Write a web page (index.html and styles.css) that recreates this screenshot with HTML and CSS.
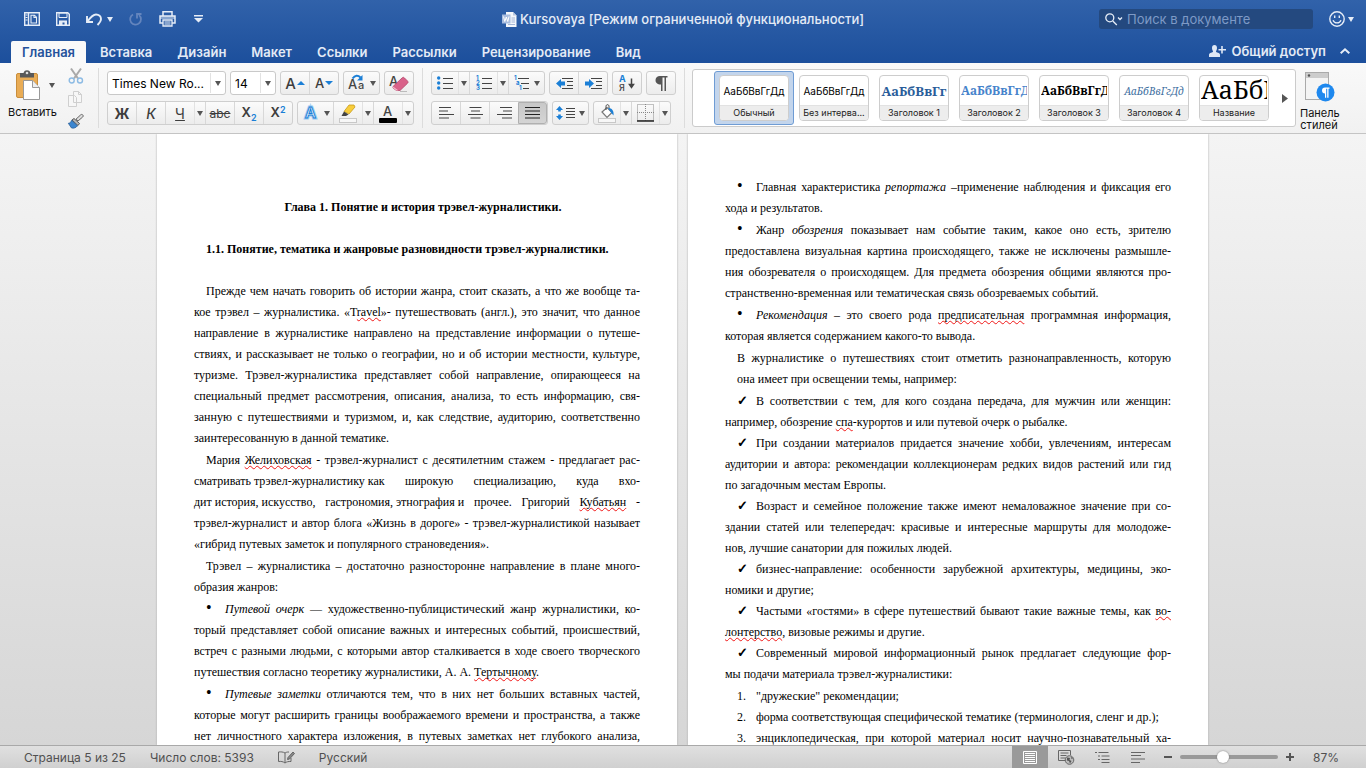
FILE: index.html
```html
<!DOCTYPE html>
<html lang="ru">
<head>
<meta charset="utf-8">
<title>Kursovaya</title>
<link rel="stylesheet" href="styles.css">
</head>
<body>
<header class="header">
  <div class="titlebar">
    <div class="quick">
      <button class="qbtn" aria-label="Боковая панель"><svg width="16" height="14" viewBox="0 0 16 14" fill="none" stroke="#e6edf7" stroke-width="1.4"><path d="M.7.7h14.600v12.600H.7zM4.500.7v12.600"/><path d="M1.500 3h2M1.500 5.500h2M1.500 8h2" stroke-width="1"/><path d="M7 3.200h3.500l2 2V11H7zM10 3v2.500h2.500" stroke-width="1.100"/></svg></button>
      <button class="qbtn" aria-label="Сохранить"><svg width="14" height="14" viewBox="0 0 14 14"><path d="M.7.7h11l1.600 1.600v11H.7z" fill="none" stroke="#e6edf7" stroke-width="1.400"/><path d="M3 1h8v4.500H3z" fill="none" stroke="#e6edf7"/><path d="M3 8.500h8V13H8.500v-2.500h-2V13H3z" fill="#e6edf7"/></svg></button>
      <button class="qbtn undo" aria-label="Отменить"><svg width="16" height="13" viewBox="0 0 16 13" fill="none" stroke="#e6edf7" stroke-width="1.900"><path d="M1 3v6h6M1.500 8.500C4 5 7 1.500 10 1.500c3 0 5 2 5 4.500 0 2.500-1.500 4-3.500 6"/></svg><i class="tri light"></i></button>
      <button class="qbtn redo" aria-label="Повторить"><svg width="14" height="14" viewBox="0 0 14 14" fill="none" stroke="#6485bd" stroke-width="1.800"><path d="M4 2.500a5.400 5.400 0 1 0 6 .6M12.500 2H8v4.500"/></svg></button>
      <button class="qbtn" aria-label="Печать"><svg width="17" height="16" viewBox="0 0 17 16"><path d="M4 5V.8h9V5M1 5h15v7H1z" fill="none" stroke="#e6edf7" stroke-width="1.500"/><path d="M1 5h15v3H1z" fill="#e6edf7" opacity=".5"/><path d="M4 9h9v6H4z" fill="#2b5ca5" stroke="#e6edf7" stroke-width="1.300"/><path d="M5.500 11h6M5.500 13h6" stroke="#e6edf7"/></svg></button>
      <button class="qbtn more" aria-label="Настроить"><svg width="9" height="8" viewBox="0 0 9 8"><path d="M0 0h9v1.500H0zM0 3h9L4.500 7.500z" fill="#e6edf7"/></svg></button>
    </div>
    <h1 class="doc-title"><svg width="15" height="15" viewBox="0 0 15 15"><path d="M4 0h7l3.500 3.500V15H4z" fill="#f4f7fb"/><path d="M11 0v3.500h3.500" fill="#b9c8e0"/><path d="M9.500 6H13M9.500 8H13M9.500 10H13M6 12.500h7" stroke="#a4b6d6"/><path d="M0 2.500h8.500v9H0z" fill="#a9bddf"/><path d="M1.500 4.500l1.300 5 1.500-4.500 1.500 4.500 1.200-5" fill="none" stroke="#fff"/></svg><span>Kursovaya [Режим ограниченной функциональности]</span></h1>
    <div class="title-right">
      <label class="search"><svg width="18" height="13" viewBox="0 0 18 13" fill="none" stroke="#e6edf7" stroke-width="1.300"><circle cx="4.800" cy="4.800" r="4"/><path d="M7.800 8l4 4M13 4.500l2 2 2-2"/></svg><input type="text" placeholder="Поиск в документе" aria-label="Поиск в документе"></label>
      <button class="qbtn smile" aria-label="Отзыв"><svg width="16" height="16" viewBox="0 0 16 16" fill="none" stroke="#e6edf7" stroke-width="1.400"><circle cx="8" cy="8" r="7.200"/><path d="M5.700 4.500v2.500M10.300 4.500v2.500M4 9.200c1.500 3.600 6.500 3.600 8 0"/></svg><i class="tri light"></i></button>
    </div>
  </div>
  <nav class="tabs">
    <button class="tab active">Главная</button>
    <button class="tab">Вставка</button>
    <button class="tab">Дизайн</button>
    <button class="tab">Макет</button>
    <button class="tab">Ссылки</button>
    <button class="tab">Рассылки</button>
    <button class="tab">Рецензирование</button>
    <button class="tab">Вид</button>
    <button class="share"><svg width="17" height="12" viewBox="0 0 17 12" fill="#dfe8f5"><path d="M5.500 0c1.700 0 2.500 1.200 2.500 3S7 6 7 6.800c0 .7 4 1 4 3V12H0V9.800c0-2 4-2.300 4-3C4 6 3 4.800 3 3s.8-3 2.500-3z"/><path d="M12.200 1h1.600v3h3.200v1.600h-3.200v3h-1.600v-3H9.500V4h2.700z"/></svg>Общий доступ</button>
    <button class="collapse" aria-label="Свернуть ленту"><svg width="10" height="6" viewBox="0 0 10 6" fill="none" stroke="#e6edf7" stroke-width="2"><path d="M.7 5.300L5 1.300l4.300 4"/></svg></button>
  </nav>
</header>

<section class="ribbon">
  <div class="clip">
    <button class="paste"><span class="paste-top"><svg width="25" height="31" viewBox="0 0 25 31"><rect x=".5" y="3.500" width="21" height="24" rx="1.500" fill="#e9ac55" stroke="#c98e3c"/><path d="M4 3h3.500C8 1 9.500.3 11 .3S14 1 14.500 3H18v4.500H4z" fill="#595959"/><circle cx="11" cy="3" r="1.300" fill="#ddd"/><path d="M7.500 10.500h9l7 7v12h-16z" fill="#fff" stroke="#999"/><path d="M16.500 10.500v7h7" fill="#eee" stroke="#999"/></svg><i class="tri"></i></span>Вставить</button>
    <div class="clip-tools">
      <button class="icon" aria-label="Вырезать"><svg width="16" height="16" viewBox="0 0 16 16" fill="none"><path d="M3 .5l7 10M13 .5l-7 10" stroke="#a9a9a9" stroke-width="2"/><circle cx="3.700" cy="12.500" r="2.500" stroke="#8dbbe4" stroke-width="1.400"/><circle cx="12" cy="12.500" r="2.500" stroke="#8dbbe4" stroke-width="1.400"/></svg></button>
      <button class="icon" aria-label="Копировать"><svg width="16" height="16" viewBox="0 0 16 16" fill="#f7f7f7" stroke="#cfcfcf"><path d="M.5 4.500h6l2 2v9h-8zM5.500.5h5l3 3v8h-8z"/><path d="M10.500.5v3h3" fill="none"/></svg></button>
      <button class="icon" aria-label="Формат по образцу"><svg width="16" height="15" viewBox="0 0 16 15"><path d="M14.500.7c1 .8.800 1.700.2 2.300L10 7 8 5.200 12.500 1c.6-.6 1.300-.8 2-.3z" fill="#ddd" stroke="#666"/><path d="M6 4.500l5.500 5-1.500 2-6-5.500z" fill="#bbb" stroke="#555"/><path d="M3.500 6.300l6 5.500c-1.500 2-3.500 2.700-6 2.200L.3 9.300c1.700 0 2.500-1 3.200-3z" fill="#3d86cf" stroke="#22568f" stroke-width=".7"/></svg></button>
    </div>
  </div>

  <div class="group">
    <div class="row">
      <span class="combo font-name"><select aria-label="Шрифт"><option>Times New Ro...</option></select><i class="tri"></i></span>
      <span class="combo font-size"><select aria-label="Размер"><option>14</option></select><i class="tri"></i></span>
      <div class="btns">
        <button class="b"  aria-label="Увеличить размер"><span class="ga big">A</span><i class="up"></i></button>
        <button class="b"  aria-label="Уменьшить размер"><span class="ga">A</span><i class="down"></i></button>
      </div>
      <div class="btns"><button class="b arrow" aria-label="Регистр"><svg width="18" height="18" viewBox="0 0 18 18"><text x="0" y="15" class="svg-t" font-size="13">A</text><text x="10" y="15" class="svg-t" font-size="11">a</text><path d="M4.500 4.500C7 1 10 1 12.500 3.500" fill="none" stroke="#1b7fd6" stroke-width="2"/><path d="M14.500 1v5.500H9z" fill="#1b7fd6"/></svg><i class="tri"></i></button></div>
      <div class="btns last"><button class="b" aria-label="Очистить формат"><svg width="22" height="20" viewBox="0 0 22 20"><text x="1" y="13" class="svg-t" font-size="13">A</text><path d="M5 13.500l9-8.500c1-.9 1.800-.9 2.500 0l3 3c.8.9.7 1.600 0 2.300L12 17.500H8.500L5 15z" fill="#d9628a" stroke="#b2456b" stroke-width=".8"/><path d="M5 13.500l5.500 4H8.500L5 15z" fill="#f4b7cb"/><path d="M12 18.500h7" stroke="#bbb"/></svg></button></div>
    </div>
    <div class="row">
      <div class="btns">
        <button class="b bold">Ж</button>
        <button class="b ital">К</button>
        <button class="b"><u>Ч</u></button>
        <button class="b drop" aria-label="Вид подчёркивания"><i class="tri"></i></button>
        <button class="b strike"><s>abc</s></button>
        <button class="b subsup">X<sub>2</sub></button>
        <button class="b subsup">X<sup>2</sup></button>
      </div>
      <div class="btns last">
        <button class="b arrow" aria-label="Эффекты текста"><svg width="18" height="18" viewBox="0 0 18 18"><text x="3" y="14" font-family="Inter, sans-serif" font-weight="600" font-size="15" fill="#fff" stroke="#9ccbf2" stroke-width="3">A</text><text x="3" y="14" font-family="Inter, sans-serif" font-weight="600" font-size="15" fill="#fff" stroke="#1b7fd6">A</text></svg><i class="tri"></i></button>
        <button class="b" aria-label="Выделение"><svg width="20" height="20" viewBox="0 0 20 20"><path d="M11 2h5l1 2-6 7-5-2.500z" fill="#f8cd3c" stroke="#c79a1a" stroke-width=".8"/><path d="M6 8.500l4.500 3L8 13H3.500z" fill="#444"/><rect x="1.500" y="15.500" width="17" height="4" fill="#f7f7f7" stroke="#c8c8c8"/></svg></button>
        <button class="b drop" aria-label="Цвет выделения"><i class="tri"></i></button>
        <button class="b" aria-label="Цвет текста"><svg width="20" height="20" viewBox="0 0 20 20"><text x="5" y="13" class="svg-t" font-size="13">A</text><rect x="1" y="15" width="18" height="5" rx="1" fill="#000"/></svg></button>
        <button class="b drop" aria-label="Другие цвета"><i class="tri"></i></button>
      </div>
    </div>
  </div>

  <div class="group">
    <div class="row">
      <div class="btns">
        <button class="b n26" aria-label="Маркеры"><svg width="16" height="14" viewBox="0 0 16 14"><g fill="#1b7fd6"><circle cx="1.700" cy="2" r="1.700"/><circle cx="1.700" cy="7" r="1.700"/><circle cx="1.700" cy="12" r="1.700"/></g><path d="M6 2.500h10M6 7.500h10M6 12.500h10" stroke="#444"/></svg></button>
        <button class="b drop" aria-label="Виды маркеров"><i class="tri"></i></button>
        <button class="b n28" aria-label="Нумерация"><svg width="16" height="16" viewBox="0 -1 16 16"><g fill="#1b7fd6" font-family="Inter, sans-serif" font-weight="700" font-size="6"><text y="4">1</text><text y="9">2</text><text y="14">3</text></g><path d="M6 2.500h10M6 7.500h10M6 12.500h10" stroke="#444"/></svg></button>
        <button class="b drop" aria-label="Виды нумерации"><i class="tri"></i></button>
        <button class="b arrow" aria-label="Многоуровневый список"><svg width="16" height="16" viewBox="0 -1 16 16"><g fill="#1b7fd6" font-family="Inter, sans-serif" font-weight="700" font-size="6"><text y="4">1</text><text x="2" y="9">a</text><text x="5" y="14">1</text></g><path d="M4 2.500h11M7 7.500h8M9 12.500h6" stroke="#444"/></svg><i class="tri"></i></button>
      </div>
      <div class="btns">
        <button class="b" aria-label="Уменьшить отступ"><svg width="17" height="13" viewBox="0 0 17 13"><path d="M0 6.500L5 2v2.500h4v4H5V11z" fill="#1b7fd6"/><path d="M6 1.500h11M11 4.500h6M11 8.500h6M6 11.500h11" stroke="#444"/></svg></button>
        <button class="b" aria-label="Увеличить отступ"><svg width="17" height="13" viewBox="0 0 17 13"><path d="M9 6.500L4 2v2.500H0v4h4V11z" fill="#1b7fd6"/><path d="M6 1.500h11M11 4.500h6M11 8.500h6M6 11.500h11" stroke="#444"/></svg></button>
      </div>
      <div class="btns"><button class="b" aria-label="Сортировка"><svg width="18" height="20" viewBox="0 -1 18 20"><text x="1" y="8" font-family="Inter, sans-serif" font-weight="700" font-size="9" fill="#1b7fd6">A</text><text x="1" y="17" class="svg-t" font-size="9">Я</text><path d="M13.500 4.500v9M11.500 10.500l2 3 2-3z" stroke="#444" stroke-width="1.500" fill="#444"/></svg></button></div>
      <div class="btns last"><button class="b" aria-label="Непечатаемые знаки"><svg width="14" height="15" viewBox="0 0 14 15"><path d="M6 0h7.500v1.500H12V15h-1.500V1.500H8.500V15H7V8.500H5.500A4.200 4.200 0 0 1 6 0z" fill="#555"/></svg></button></div>
    </div>
    <div class="row">
      <div class="btns">
        <button class="b" aria-label="По левому краю"><svg width="15" height="12" viewBox="0 0 15 12"><path d="M0 .5h12M0 4h9M0 7.500h15M0 11h10" stroke="#444"/></svg></button>
        <button class="b" aria-label="По центру"><svg width="15" height="12" viewBox="0 0 15 12"><path d="M1.500.5h12M3 4h9M0 7.500h15M2.500 11h10" stroke="#444"/></svg></button>
        <button class="b" aria-label="По правому краю"><svg width="15" height="12" viewBox="0 0 15 12"><path d="M3 .5h12M6 4h9M0 7.500h15M5 11h10" stroke="#444"/></svg></button>
        <button class="b pressed" aria-label="По ширине"><svg width="15" height="12" viewBox="0 0 15 12"><path d="M0 .5h15M0 4h15M0 7.500h15M0 11h15" stroke="#222"/></svg></button>
      </div>
      <div class="btns"><button class="b arrow" aria-label="Интервал"><svg width="19" height="14" viewBox="0 0 19 14"><path d="M3.500 0L7 4H4.800v1.500H2.200V4H0zM3.500 14L7 10H4.800V8.500H2.200V10H0z" fill="#1b7fd6"/><path d="M10 2.500h9M10 5.500h9M10 8.500h9M10 11.500h9" stroke="#444"/></svg><i class="tri"></i></button></div>
      <div class="btns">
        <button class="b n26" aria-label="Заливка"><svg width="18" height="19" viewBox="0 0 18 19"><path d="M4 8l5-4.500 5 5-5 5z" fill="#fff" stroke="#777" stroke-width="1.200"/><path d="M8 6V2.500c0-2.500 3-2.500 3 0V4" fill="none" stroke="#444"/><path d="M10 4c4 0 6 2.500 5.500 7.500l-2.500-3z" fill="#1b7fd6"/><rect x=".5" y="14.500" width="17" height="4" fill="#f7f7f7" stroke="#c8c8c8"/></svg></button>
        <button class="b drop" aria-label="Цвет заливки"><i class="tri"></i></button>
        <button class="b n28" aria-label="Границы"><svg width="17" height="18" viewBox="0 0 17 18"><path d="M.5.5h16v16H.5zM8.500 0v17M0 8.500h17" fill="none" stroke="#888" stroke-dasharray="1 1"/><path d="M0 17h17" stroke="#222" stroke-width="1.500"/></svg></button>
        <button class="b drop" aria-label="Виды границ"><i class="tri"></i></button>
      </div>
    </div>
  </div>

  <div class="styles">
    <div class="gallery">
      <button class="style selected"><span class="tile"><span class="sample">АаБбВвГгДд</span><span class="name">Обычный</span></span></button>
      <button class="style"><span class="tile"><span class="sample">АаБбВвГгДд</span><span class="name">Без интерва...</span></span></button>
      <button class="style"><span class="tile"><span class="sample h-one">АаБбВвГг</span><span class="name">Заголовок 1</span></span></button>
      <button class="style"><span class="tile"><span class="sample h-two">АаБбВвГгД</span><span class="name">Заголовок 2</span></span></button>
      <button class="style"><span class="tile"><span class="sample h-three">АаБбВвГгД</span><span class="name">Заголовок 3</span></span></button>
      <button class="style"><span class="tile"><span class="sample h-four">АаБбВвГгДд</span><span class="name">Заголовок 4</span></span></button>
      <button class="style"><span class="tile"><span class="sample h-title">АаБбВ</span><span class="name">Название</span></span></button>
      <button class="next" aria-label="Другие стили"><svg width="6" height="9" viewBox="0 0 6 9"><path d="M0 0l6 4.500L0 9z" fill="#555"/></svg></button>
    </div>
    <button class="pane"><svg width="30" height="31" viewBox="0 0 30 31"><rect x=".5" y=".5" width="23" height="27" fill="#f4f4f4" stroke="#aaa"/><path d="M1 1h22v5H1z" fill="#ccc"/><circle cx="4" cy="3.500" r="1.200" fill="#555"/><circle cx="20.500" cy="20.500" r="9" fill="#1e88ee"/><path d="M20 15.500h4.500v1.200h-1v9h-1.300v-9h-1v9H20v-4.200a3 3 0 0 1 0-6z" fill="#fff"/></svg>Панель<br>стилей</button>
  </div>
</section>

<main class="desk">
  <article class="page first">
    <h2 class="chapter">Глава 1. Понятие и история трэвел-журналистики.</h2>
    <h3 class="section">1.1. Понятие, тематика и жанровые разновидности трэвел-журналистики.</h3>
    <p>Прежде чем начать говорить об истории жанра, стоит сказать, а что же вообще та-<br>кое трэвел – журналистика. «T<span class="err">ravel</span>»- путешествовать (англ.), это значит, что данное<br>направление в журналистике направлено на представление информации о путеше-<br>ствиях, и рассказывает не только о географии, но и об истории местности, культуре,<br>туризме. Трэвел-журналистика представляет собой направление, опирающееся на<br>специальный предмет рассмотрения, описания, анализа, то есть информацию, свя-<br>занную с путешествиями и туризмом, и, как следствие, аудиторию, соответственно<span class="end">заинтересованную в данной тематике.</span></p>
    <p>Мария <span class="err">Желиховская</span> - трэвел-журналист с десятилетним стажем - предлагает рас-<br><span class="tight">сматривать трэвел-журналистику как</span> широкую специализацию, куда вхо-<br><span class="tight">дит история, искусство,</span> <span class="tight">гастрономия, этнография и</span> прочее. Григорий <span class="err">Кубатьян</span> -<br>трэвел-журналист и автор блога «Жизнь в дороге» - трэвел-журналистикой называет<span class="end">«гибрид путевых заметок и популярного страноведения».</span></p>
    <p>Трэвел – журналистика – достаточно разносторонне направление в плане много-<span class="end">образия жанров:</span></p>
    <ul class="list">
      <li><span class="mark dot">•</span><em>Путевой очерк</em> — художественно-публицистический жанр журналистики, ко-<br>торый представляет собой описание важных и интересных событий, происшествий,<br>встреч с разными людьми, с которыми автор сталкивается в ходе своего творческого<span class="end">путешествия согласно теоретику журналистики, А. А. <span class="err">Тертычному</span>.</span></li>
      <li><span class="mark dot">•</span><em>Путевые заметки</em> отличаются тем, что в них нет больших вставных частей,<br>которые могут расширить границы воображаемого времени и пространства, а также<br>нет личностного характера изложения, в путевых заметках нет глубокого анализа,</li>
    </ul>
  </article>
  <article class="page second">
    <ul class="list">
      <li><span class="mark dot">•</span>Главная характеристика <em>репортажа</em> –применение наблюдения и фиксация его<span class="end">хода и результатов.</span></li>
      <li><span class="mark dot">•</span>Жанр <em>обозрения</em> показывает нам событие таким, какое оно есть, зрителю<br>предоставлена визуальная картина происходящего, также не исключены размышле-<br>ния обозревателя о происходящем. Для предмета обозрения общими являются про-<span class="end">странственно-временная или тематическая связь обозреваемых событий.</span></li>
      <li><span class="mark dot">•</span><em>Рекомендация</em> – это своего рода <span class="err">предписательная</span> программная информация,<span class="end">которая является содержанием какого-то вывода.</span></li>
    </ul>
    <p class="inset">В журналистике о путешествиях стоит отметить разнонаправленность, которую<span class="end">она имеет при освещении темы, например:</span></p>
    <ul class="list checks">
      <li><span class="mark check">✓</span>В соответствии с тем, для кого создана передача, для мужчин или женщин:<span class="end">например, обозрение <span class="err">спа</span>-курортов и или путевой очерк о рыбалке.</span></li>
      <li><span class="mark check">✓</span>При создании материалов придается значение хобби, увлечениям, интересам<br>аудитории и автора: рекомендации коллекционерам редких видов растений или гид<span class="end">по загадочным местам Европы.</span></li>
      <li><span class="mark check">✓</span>Возраст и семейное положение также имеют немаловажное значение при со-<br>здании статей или телепередач: красивые и интересные маршруты для молодоже-<span class="end">нов, лучшие санатории для пожилых людей.</span></li>
      <li><span class="mark check">✓</span>бизнес-направление: особенности зарубежной архитектуры, медицины, эко-<span class="end">номики и другие;</span></li>
      <li><span class="mark check">✓</span>Частыми «гостями» в сфере путешествий бывают такие важные темы, как <span class="err">во-</span><span class="end"><span class="err">лонтерство</span>, визовые режимы и другие.</span></li>
      <li><span class="mark check">✓</span>Современный мировой информационный рынок предлагает следующие фор-<span class="end">мы подачи материала трэвел-журналистики:</span></li>
    </ul>
    <ol class="list checks">
      <li><span class="end"><span class="mark">1.</span>"дружеские" рекомендации;</span></li>
      <li><span class="end"><span class="mark">2.</span>форма соответствующая специфической тематике (терминология, сленг и др.);</span></li>
      <li><span class="mark">3.</span>энциклопедическая, при которой материал носит научно-познавательный ха-</li>
    </ol>
  </article>
</main>

<footer class="status">
  <span>Страница 5 из 25</span>
  <span>Число слов: 5393</span>
  <button class="icon" aria-label="Правописание"><svg width="17" height="13" viewBox="0 0 17 13" fill="none" stroke="#666"><path d="M7 2C5 .8 3 .8.500 1v9.500c2.500-.3 4.500 0 6.500 1.500M7 2c1-.7 2-1 4-1M7 2v10c1.500-1.200 3.500-1.700 6-1.500V7"/><path d="M9.500 8.500l.5-2L15 1l1.500 1.500-5 5.500z" fill="#888"/></svg></button>
  <span>Русский</span>
  <div class="views">
    <button class="view on" aria-label="Разметка страницы"><svg width="14" height="13" viewBox="0 0 14 13"><path d="M.5.5h13v12H.5z" fill="none" stroke="#fff"/><path d="M2 2.500h10M2 4.500h10M2 6.500h10M2 8.500h10M2 10.500h10" stroke="#fff"/></svg></button>
    <button class="view" aria-label="Веб-документ"><svg width="17" height="15" viewBox="0 0 17 15"><path d="M8 10.500H.5V.5h12V5M2.500 3h8M2.500 5.500h6M2.500 8h5" fill="none" stroke="#666"/><circle cx="11.500" cy="10" r="4.300" fill="#bbb" stroke="#666"/><path d="M9 7.500l3 .5-.5 2 2 1-1.500 2.500-1-2.500-2-.5zM13 6.500l2 2-1.500.5z" fill="#555"/></svg></button>
    <button class="view" aria-label="Структура"><svg width="15" height="11" viewBox="0 0 15 11"><path d="M0 .5h2M3.500.5h10M3 4h2M6.500 4h8M3 7.500h2M6.500 7.500h8M6.500 10.500h8" stroke="#666"/></svg></button>
    <button class="view" aria-label="Черновик"><svg width="14" height="11" viewBox="0 0 14 11"><path d="M0 .5h14M0 3.500h10M0 7h14M0 10.500h9" stroke="#666"/></svg></button>
  </div>
  <div class="zoom">
    <button class="icon" aria-label="Уменьшить"><svg width="8" height="8" viewBox="0 0 8 8"><path d="M0 4h8" stroke="#555" stroke-width="2"/></svg></button>
    <input type="range" min="0" max="100" value="43" aria-label="Масштаб">
    <button class="icon" aria-label="Увеличить"><svg width="8" height="8" viewBox="0 0 8 8"><path d="M0 4h8M4 0v8" stroke="#555" stroke-width="2"/></svg></button>
  </div>
  <span class="percent">87%</span>
</footer>
</body>
</html>
```

FILE: styles.css
```css
* { box-sizing: border-box; }

body {
  margin: 0;
  height: 100vh;
  display: flex;
  flex-direction: column;
  overflow: hidden;
  font-family: Inter, Roboto, "Liberation Sans", sans-serif;
  font-size: 12px;
  color: #111;
}

button {
  margin: 0;
  padding: 0;
  border: 0;
  background: none;
  font: inherit;
  color: inherit;
  display: flex;
  align-items: center;
  justify-content: center;
}

svg { display: block; flex: none; overflow: visible; }

.tri {
  flex: none;
  border: 3px solid transparent;
  border-top: 5px solid #555;
  border-bottom: 0;
}
.tri.light { border-top-color: #e6edf7; }

/* Title bar and tabs */
.header {
  flex: none;
  background: linear-gradient(#3162aa, #1c4f9c);
  color: #e4ebf6;
}
.titlebar {
  height: 38px;
  display: grid;
  grid-template-columns: 1fr auto 1fr;
  align-items: center;
  padding: 0 12px;
}
.quick { display: flex; align-items: center; gap: 16px; padding-left: 12px; }
.quick .undo { gap: 5px; }
.quick .more { margin-left: 2px; }
.doc-title {
  margin: 0;
  display: flex;
  align-items: center;
  gap: 3px;
  font-size: 13px;
  font-weight: 500;
  white-space: nowrap;
}
.title-right { display: flex; justify-content: flex-end; align-items: center; gap: 16px; }
.search {
  display: flex;
  align-items: center;
  gap: 4px;
  width: 214px;
  height: 20px;
  padding: 0 6px;
  border-radius: 3px;
  background: #24497f;
}
.search input {
  flex: 1;
  min-width: 0;
  padding: 0;
  border: 0;
  background: none;
  font: inherit;
  font-size: 13px;
  color: #fff;
}
.search input::placeholder { color: #7e9ac6; }
.smile { gap: 3px; }

.tabs { display: flex; align-items: flex-end; height: 25px; padding: 0 16px 0 11px; gap: 3px; }
.tab {
  height: 22px;
  padding: 0 11px;
  font-size: 13px;
  font-weight: 600;
  border-radius: 2px 2px 0 0;
}
.tab.active { background: #f9f9f9; color: #24519b; }
.share { margin-left: auto; height: 24px; gap: 5px; font-size: 13px; font-weight: 600; }
.collapse { height: 24px; margin-left: 11px; }

/* Ribbon */
.ribbon {
  flex: none;
  display: flex;
  height: 71px;
  padding: 5px 28px 5px 9px;
  background: linear-gradient(#f9f9f9, #f1f1f1);
  border-bottom: 1px solid #c4c4c4;
}
.clip {
  display: flex;
  gap: 12px;
  padding-right: 14px;
  border-right: 1px solid #dcdcdc;
}
.paste {
  flex-direction: column;
  justify-content: flex-start;
  gap: 4px;
  padding-top: 2px;
  width: 47px;
  font-size: 11px;
  line-height: 14px;
  white-space: nowrap;
}
.paste-top { display: flex; align-items: center; gap: 8px; padding-left: 6px; }
.clip-tools { display: flex; flex-direction: column; gap: 7px; width: 16px; }
.group {
  display: flex;
  flex-direction: column;
  gap: 6px;
  padding: 3px 8px 0;
  border-right: 1px solid #dcdcdc;
}
.row { display: flex; gap: 4px; }
.row .last { margin-left: auto; }
.btns {
  display: flex;
  height: 24px;
  border: 1px solid #cfcfcf;
  border-radius: 3px;
  background: linear-gradient(#fbfbfb, #ececec);
}
.b { width: 29px; border-left: 1px solid #d8d8d8; color: #3d3d3d; font-size: 14px; }
.b:first-child { border-left: 0; width: 28px; }
.b.arrow { width: 36px; gap: 4px; }
.b.arrow:first-child { width: 35px; }
.b.drop { width: 11px; border-left-color: #e2e2e2; }
.b.n26 { width: 26px; }
.b.n28 { width: 28px; }
.b.pressed { background: linear-gradient(#c8c8c8, #d4d4d4); border: 1px solid #b0b0b0; border-radius: 0 3px 3px 0; }
.b.bold { font-weight: 700; }
.b.ital { font-style: italic; font-weight: 500; }
.strike { font-size: 12px; }
.subsup { font-size: 13px; font-weight: 600; padding-bottom: 2px; }
.subsup sub, .subsup sup { font-size: 9px; color: #1b7fd6; line-height: 1; }
.subsup sub { align-self: flex-end; }
.subsup sup { align-self: flex-start; padding-top: 3px; }
.ga { font-size: 13px; font-weight: 500; }
.ga.big { font-size: 15px; }
.up, .down { margin-left: 1px; border: 4px solid transparent; }
.up { border-bottom: 4px solid #1b7fd6; border-top: 0; }
.down { border-top: 4px solid #1b7fd6; border-bottom: 0; }
.svg-t { font-family: Inter, sans-serif; font-weight: 500; fill: #444; }

.combo {
  display: flex;
  align-items: center;
  height: 24px;
  border: 1px solid #c9c9c9;
  border-radius: 3px;
  background: #fff;
}
.combo select {
  appearance: none;
  flex: 1;
  min-width: 0;
  height: 20px;
  padding: 0 4px;
  border: 0;
  border-right: 1px solid #e2e2e2;
  background: none;
  font: inherit;
  color: #000;
}
.combo .tri { margin: 0 4px; }
.font-name { width: 119px; }
.font-size { width: 46px; }

/* Style gallery */
.styles { flex: 1; min-width: 0; display: flex; gap: 4px; padding-left: 7px; }
.gallery {
  flex: 1;
  min-width: 0;
  display: flex;
  align-items: center;
  height: 58px;
  margin-top: 1px;
  padding-left: 21px;
  border: 1px solid #cbcbcb;
  border-radius: 3px;
  background: #fff;
  overflow: hidden;
}
.style { flex: none; width: 80px; height: 54px; border: 1px solid transparent; border-radius: 3px; }
.style.selected { background: #c3d5ec; border-color: #6f9cd4; }
.tile {
  display: flex;
  flex-direction: column;
  width: 70px;
  height: 46px;
  border: 1px solid #cdcdcd;
  border-radius: 4px;
  overflow: hidden;
  background: #fff;
}
.sample { flex: 1; min-height: 0; margin: 0 1px; overflow: hidden; line-height: 30px; white-space: nowrap; font-size: 10px; color: #000; }
.name { height: 15px; line-height: 14px; font-size: 9px; color: #222; background: #ededed; border-top: 1px solid #e2e2e2; white-space: nowrap; }
.h-one, .h-two, .h-three, .h-four, .h-title { font-family: "Noto Serif", "Liberation Serif", serif; font-weight: 700; font-size: 13px; }
.h-one { color: #2a5d9a; }
.h-two { color: #4683cb; }
.h-two, .h-three { font-size: 12px; }
.h-four { color: #41709f; font-style: italic; font-weight: 400; font-size: 10px; }
.h-title { font-size: 25px; font-weight: 400; text-align: left; line-height: 26px; }
.next { flex: 1; }
.pane { flex: none; width: 38px; padding-top: 4px; font-size: 11px; line-height: 12px; display: block; }
.pane svg { margin: 0 auto 4px 5px; }

/* Document */
.desk {
  flex: 1;
  min-height: 0;
  overflow: hidden;
  display: flex;
  justify-content: center;
  gap: 11px;
  padding-right: 1px;
  background: linear-gradient(#f4f4f4, #d6d6d6);
}
.page {
  width: 520px;
  padding: 0 37px;
  background: #fff;
  box-shadow: 0 0 2px #aaa;
  font-family: "Liberation Serif", serif;
  font-size: 12px;
  line-height: 21px;
  color: #000;
}
.first { padding-top: 63px; }
.second { padding-top: 43px; }
.page h2, .page h3 { margin: 0 0 21px; font-size: 12px; text-indent: 12px; white-space: nowrap; }
.chapter { text-align: center; }
.page p, .list li { margin: 0 0 1px; text-align: justify; text-align-last: justify; }
.page p { text-indent: 12px; }
.page .inset { padding-left: 12px; text-indent: 0; }
.end { display: block; text-align-last: left; text-indent: 0; white-space: nowrap; }
.tight { display: inline-block; text-indent: 0; text-align-last: left; line-height: 20px; }
.list { margin: 0; padding: 0; list-style: none; }
.list.checks { margin-bottom: 1px; }
.list.checks li { margin: 0; }
.mark { display: inline-block; width: 19px; margin-left: 12px; text-align-last: left; line-height: 12px; }
.dot { font-size: 16px; }
.check { font-size: 13px; font-weight: 700; }
.err { text-decoration: underline wavy #f01818 1px; text-underline-offset: 1px; text-decoration-skip-ink: none; }

/* Status bar */
.status {
  flex: none;
  display: flex;
  align-items: center;
  height: 23px;
  padding: 0 27px 0 24px;
  gap: 24px;
  border-top: 1px solid #a9a9a9;
  background: linear-gradient(#e0e0e0, #d0d0d0);
  color: #505050;
  white-space: nowrap;
}
.views { display: flex; align-self: stretch; margin-left: auto; }
.view { width: 36px; }
.view.on { background: #9a9a9a; }
.zoom { display: flex; align-items: center; gap: 8px; margin: 0 -5px 0 -16px; }
.zoom input {
  appearance: none;
  width: 98px;
  height: 12px;
  margin: 0;
  background: none;
}
.zoom input::-webkit-slider-runnable-track { height: 4px; border-radius: 2px; background: #999; }
.zoom input::-webkit-slider-thumb {
  appearance: none;
  width: 12px;
  height: 12px;
  margin-top: -4px;
  border-radius: 50%;
  background: #fff;
  box-shadow: 0 0 2px #777;
}
```
